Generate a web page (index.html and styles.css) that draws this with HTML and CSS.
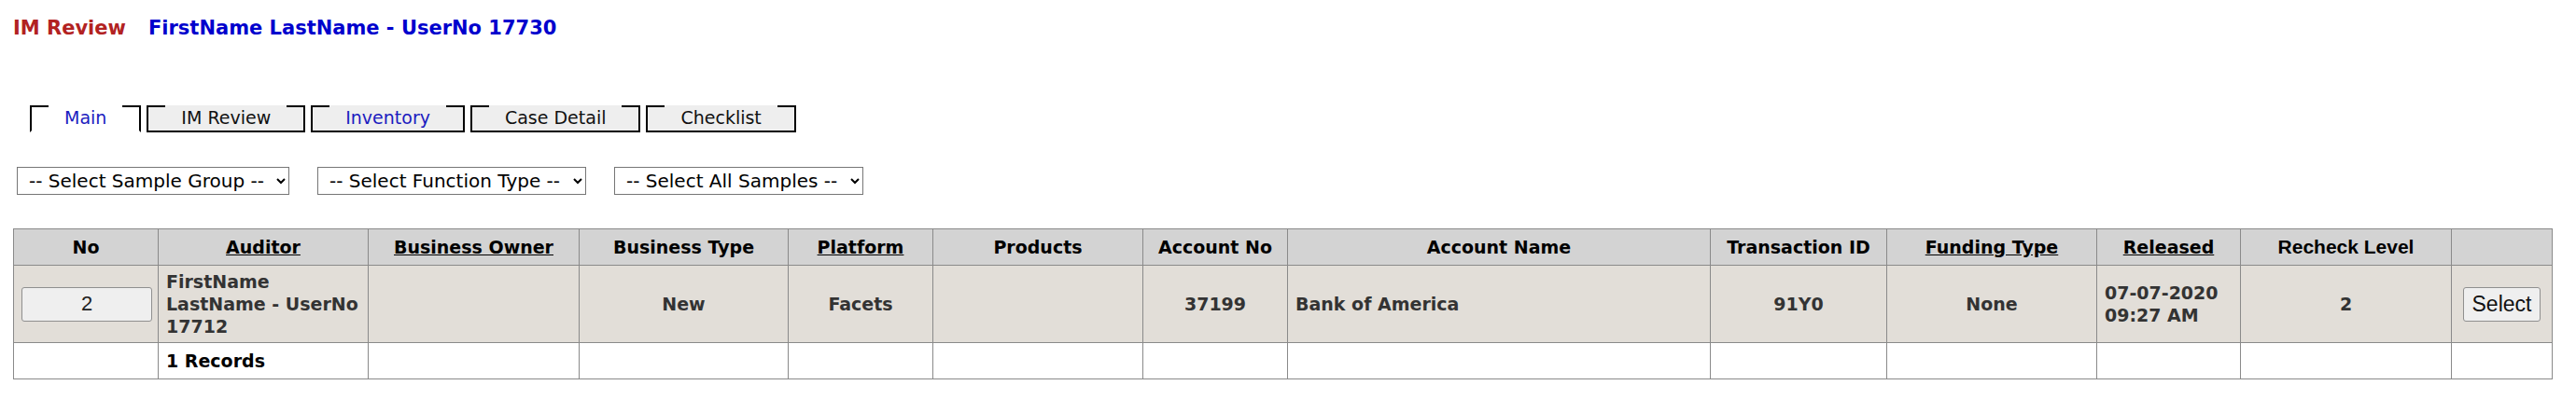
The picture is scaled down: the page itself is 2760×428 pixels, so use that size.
FILE: index.html
```html
<!DOCTYPE html>
<html>
<head>
<meta charset="utf-8">
<link rel="stylesheet" href="styles.css">
</head>
<body>
<div class="page">
  <h1 class="title"><span class="title-app">IM Review</span><span class="title-user">FirstName LastName - UserNo 17730</span></h1>

  <div class="tabs">
    <a class="tab tab-active tab-blue">Main</a>
    <a class="tab">IM Review</a>
    <a class="tab tab-blue">Inventory</a>
    <a class="tab">Case Detail</a>
    <a class="tab">Checklist</a>
  </div>

  <div class="filters">
    <select class="filter"><option>-- Select Sample Group --</option></select>
    <select class="filter"><option>-- Select Function Type --</option></select>
    <select class="filter"><option>-- Select All Samples --</option></select>
  </div>

  <table class="grid">
    <colgroup>
      <col class="w155"><col class="w225"><col class="w226"><col class="w224"><col class="w155"><col class="w225"><col class="w155"><col class="w453"><col class="w189"><col class="w225"><col class="w154"><col class="w226"><col>
    </colgroup>
    <thead>
      <tr>
        <th>No</th>
        <th><a class="sort">Auditor</a></th>
        <th><a class="sort">Business Owner</a></th>
        <th>Business Type</th>
        <th><a class="sort">Platform</a></th>
        <th>Products</th>
        <th>Account No</th>
        <th>Account Name</th>
        <th>Transaction ID</th>
        <th><a class="sort">Funding Type</a></th>
        <th><a class="sort">Released</a></th>
        <th class="arial">Recheck Level</th>
        <th></th>
      </tr>
    </thead>
    <tbody>
      <tr class="row">
        <td class="c"><input class="no-input" type="text" value="2"></td>
        <td>FirstName LastName - UserNo 17712</td>
        <td></td>
        <td class="c">New</td>
        <td class="c">Facets</td>
        <td></td>
        <td class="c">37199</td>
        <td>Bank of America</td>
        <td class="c">91Y0</td>
        <td class="c">None</td>
        <td>07-07-2020 09:27 AM</td>
        <td class="c">2</td>
        <td class="c"><button class="btn">Select</button></td>
      </tr>
      <tr class="foot">
        <td></td>
        <td>1 Records</td>
        <td></td><td></td><td></td><td></td><td></td><td></td><td></td><td></td><td></td><td></td><td></td>
      </tr>
    </tbody>
  </table>
</div>
</body>
</html>
```

FILE: styles.css
```css
html, body {
  margin: 0;
  padding: 0;
  background: #ffffff;
}

.page {
  padding: 0 25px 0 14px;
  font-family: "DejaVu Sans", Verdana, sans-serif;
}

.title {
  margin: 0;
  padding-top: 15px;
  font-size: 21px;
  font-weight: bold;
  line-height: 30px;
  display: flex;
  gap: 24px;
}

.title-app {
  color: #b22222;
}

.title-user {
  color: #0000cd;
}

.tabs {
  display: flex;
  gap: 6px;
  margin-top: 68px;
  margin-left: 18px;
}

.tab {
  display: block;
  height: 27px;
  line-height: 27px;
  padding: 0 35px;
  font-size: 19px;
  color: #111111;
  border-left: 2px solid #000;
  border-right: 2px solid #000;
  border-bottom: 2px solid #000;
  background:
    linear-gradient(#000, #000) left top / 18px 2px no-repeat,
    linear-gradient(#000, #000) right top / 18px 2px no-repeat,
    #eeeeee;
}

.tab-active {
  border-bottom: 2px solid transparent;
  background:
    linear-gradient(#000, #000) left top / 18px 2px no-repeat,
    linear-gradient(#000, #000) right top / 18px 2px no-repeat,
    #ffffff;
}

.tab-blue {
  color: #1c1cc0;
}

.filters {
  display: flex;
  gap: 30px;
  margin-top: 37px;
  margin-left: 4px;
}

.filter {
  height: 30px;
  font-family: "DejaVu Sans", Verdana, sans-serif;
  font-size: 20px;
  color: #000;
  background: #fff;
  border: 1px solid #767676;
  padding: 0 10px 0 8px;
}

.grid {
  margin-top: 36px;
  width: 2721px;
  table-layout: fixed;
  border-collapse: collapse;
  font-size: 19px;
  font-weight: bold;
  line-height: 24px;
}

.w154 { width: 154px; }
.w155 { width: 155px; }
.w189 { width: 189px; }
.w224 { width: 224px; }
.w225 { width: 225px; }
.w226 { width: 226px; }
.w453 { width: 453px; }

.grid th,
.grid td {
  border: 1px solid #8a8a8a;
  padding: 7px 8px;
  vertical-align: middle;
}

.grid th {
  background: #d3d3d3;
  color: #000;
  text-align: center;
}

.grid th.arial {
  font-family: "Liberation Sans", Arial, sans-serif;
  font-size: 21px;
}

.sort {
  color: #000;
  text-decoration: underline;
}

.row td {
  background: #e2ded8;
  color: #333333;
  padding-top: 5px;
  padding-bottom: 5px;
  height: 70px;
  text-align: left;
}

.row td.c,
.foot td.c {
  text-align: center;
}

.foot td {
  color: #000;
  background: #fff;
  height: 23px;
}

.no-input {
  box-sizing: border-box;
  width: 140px;
  height: 37px;
  margin: 0;
  font-family: "Liberation Sans", Arial, sans-serif;
  font-size: 22px;
  text-align: center;
  color: #222;
  background: #efefef;
  border: 1px solid #8f8f8f;
  border-radius: 3px;
}

.btn {
  box-sizing: border-box;
  height: 37px;
  padding: 0 9px;
  font-family: "Liberation Sans", Arial, sans-serif;
  font-size: 23px;
  color: #111;
  background: #efefef;
  border: 1px solid #8f8f8f;
  border-radius: 3px;
}
```
